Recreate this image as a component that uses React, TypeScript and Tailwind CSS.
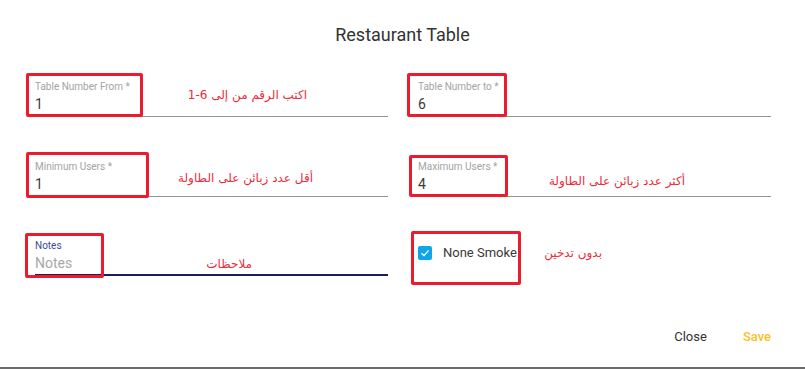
import React from "react";

type Box = { l: number; t: number; w: number; h: number };
type Note = { text: React.ReactNode; r: number; t: number };

const RedBox = ({ b }: { b: Box }) => (
  <div
    className="absolute border-[3px] border-[#ec1c2e] rounded-[2px] pointer-events-none"
    style={{ left: b.l, top: b.t, width: b.w, height: b.h }}
  />
);

const Ann = ({ n }: { n: Note }) => (
  <div
    dir="rtl"
    className="absolute text-[12px] leading-[16px] text-[#ee2a3a] whitespace-nowrap"
    style={{ right: n.r, top: n.t, fontFamily: '"DejaVu Sans", sans-serif' }}
  >
    {n.text}
  </div>
);

const Field = ({
  label,
  value,
  box,
  note,
}: {
  label: string;
  value: string;
  box: Box;
  note?: Note;
}) => (
  <div className="relative flex flex-col border-b border-[#949494] pb-[3px]">
    <div className="text-[10px] leading-[12px] text-[#a3a3a3]">{label}</div>
    <div className="mt-[2px] text-[14px] leading-[18px] text-[#3a3a3a]">{value}</div>
    {note && <Ann n={note} />}
    <RedBox b={box} />
  </div>
);

export default function App() {
  return (
    <div
      className="relative w-[805px] h-[369px] bg-white flex flex-col border-b-[2px] border-[#6b6b6b] overflow-hidden"
      style={{ fontFamily: 'Roboto, "Noto Sans", sans-serif' }}
    >
      <div className="pt-[23px] text-center text-[18px] leading-[24px] text-[#333]">
        Restaurant Table
      </div>
      <div className="mt-[34px] pl-[35px] grid grid-cols-[353px_353px] gap-x-[30px] gap-y-[44px]">
        <Field
          label="Table Number From *"
          value="1"
          box={{ l: -9, t: -8, w: 117, h: 44 }}
          note={{
            text: (
              <>
                اكتب الرقم من إلى{" "}
                <span dir="ltr" className="inline-block">
                  1-6
                </span>
              </>
            ),
            r: 81,
            t: 6,
          }}
        />
        <Field label="Table Number to *" value="6" box={{ l: -11, t: -8, w: 100, h: 44 }} />
        <Field
          label="Minimum Users *"
          value="1"
          box={{ l: -9, t: -9, w: 123, h: 46 }}
          note={{ text: "أقل عدد زبائن على الطاولة", r: 75, t: 9 }}
        />
        <Field
          label="Maximum Users *"
          value="4"
          box={{ l: -9, t: -6, w: 99, h: 42 }}
          note={{ text: "أكثر عدد زبائن على الطاولة", r: 86, t: 12 }}
        />
        <div className="relative -mt-[1px] flex flex-col border-b-2 border-[#1c1f5a] pb-[2px]">
          <div className="text-[10px] leading-[12px] text-[#3f4a9a]">Notes</div>
          <div className="mt-[2px] text-[14px] leading-[18px] text-[#a8a8a8]">Notes</div>
          <Ann n={{ text: "ملاحظات", r: 136, t: 16 }} />
          <RedBox b={{ l: -10, t: -7, w: 79, h: 45 }} />
        </div>
        <div className="relative -mt-[1px] flex items-start h-[36px]">
          <div className="mt-[5px] flex items-center gap-[11px]">
            <div className="w-[14px] h-[14px] rounded-[2px] bg-[#0fa5e9] flex items-center justify-center">
              <svg width="10" height="10" viewBox="0 0 10 10">
                <path d="M1.5 5.2 L4 7.6 L8.6 2.4" stroke="white" strokeWidth="1.3" fill="none" />
              </svg>
            </div>
            <span className="text-[13px] leading-[16px] text-[#3a3a3a]">None Smoke</span>
          </div>
          <Ann n={{ text: "بدون تدخين", r: 169, t: 5 }} />
          <RedBox b={{ l: -7, t: -9, w: 110, h: 54 }} />
        </div>
      </div>
      <div className="mt-auto mb-[22px] flex justify-end items-center gap-[36px] pr-[34px] text-[13px] leading-[16px]">
        <span className="text-[#333]">Close</span>
        <span className="text-[#fbbf24] font-medium">Save</span>
      </div>
    </div>
  );
}
